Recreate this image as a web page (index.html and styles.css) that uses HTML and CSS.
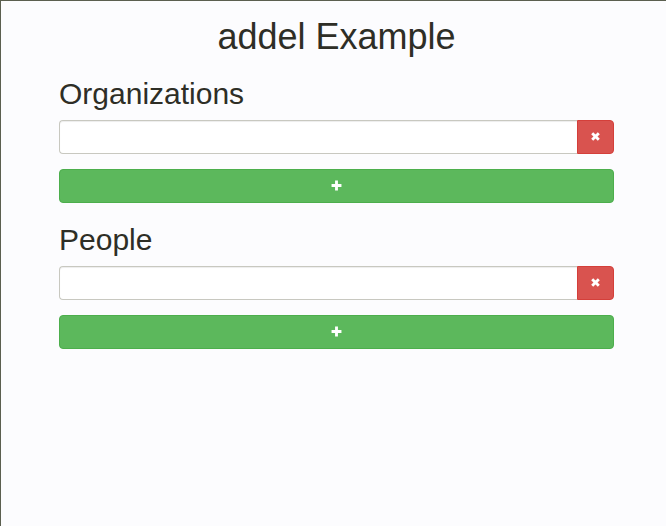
FILE: index.html
```html
<!DOCTYPE html>
<html>
<head>
<meta charset="utf-8">
<link rel="stylesheet" href="styles.css">
</head>
<body>
<div class="frame">
  <div class="container">
    <h1 class="title">addel Example</h1>
    <section class="group">
      <h2 class="heading">Organizations</h2>
      <div class="input-row">
        <input class="field" type="text">
        <button class="btn btn-del" type="button">
          <svg width="11" height="11" viewBox="0 0 10 10"><path d="M2 2 L8 8 M8 2 L2 8" stroke="#fff" stroke-width="2.6" stroke-linecap="butt"/></svg>
        </button>
      </div>
      <button class="btn btn-add" type="button">
        <svg width="11" height="11" viewBox="0 0 10 10"><path d="M5 0.5 V9.5 M0.5 5 H9.5" stroke="#fff" stroke-width="2.6"/></svg>
      </button>
    </section>
    <section class="group">
      <h2 class="heading">People</h2>
      <div class="input-row">
        <input class="field" type="text">
        <button class="btn btn-del" type="button">
          <svg width="11" height="11" viewBox="0 0 10 10"><path d="M2 2 L8 8 M8 2 L2 8" stroke="#fff" stroke-width="2.6" stroke-linecap="butt"/></svg>
        </button>
      </div>
      <button class="btn btn-add" type="button">
        <svg width="11" height="11" viewBox="0 0 10 10"><path d="M5 0.5 V9.5 M0.5 5 H9.5" stroke="#fff" stroke-width="2.6"/></svg>
      </button>
    </section>
  </div>
</div>
</body>
</html>
```

FILE: styles.css
```css
html, body {
  margin: 0;
  padding: 0;
  background: #fcfcfe;
}
body {
  font-family: "Liberation Sans", Arial, sans-serif;
  color: #2e2e26;
}
.frame {
  box-sizing: border-box;
  height: 526px;
  border-top: 1px solid #5b5f4f;
  border-left: 1px solid #5b5f4f;
}
.container {
  width: 555px;
  margin-left: 58px;
  display: flex;
  flex-direction: column;
}
.title {
  font-size: 36px;
  font-weight: 500;
  line-height: 1.1;
  text-align: center;
  margin: 16px 0 0;
}
.group {
  display: flex;
  flex-direction: column;
}
.heading {
  font-size: 30px;
  font-weight: 500;
  line-height: 33px;
  margin: 20px 0 10px;
}
.input-row {
  display: flex;
  height: 34px;
}
.field {
  flex: 1;
  box-sizing: border-box;
  height: 34px;
  margin: 0;
  border: 1px solid #c8c8c0;
  border-right: none;
  border-radius: 4px 0 0 4px;
  background: #fff;
  box-shadow: inset 0 1px 1px rgba(0,0,0,0.075);
}
.btn {
  box-sizing: border-box;
  height: 34px;
  margin: 0;
  padding: 0;
  display: flex;
  align-items: center;
  justify-content: center;
  cursor: pointer;
}
.btn-del {
  width: 37px;
  background: #d9534f;
  border: 1px solid #d43f3a;
  border-radius: 0 4px 4px 0;
}
.btn-add {
  width: 100%;
  margin-top: 15px;
  background: #5cb85c;
  border: 1px solid #4cae4c;
  border-radius: 4px;
}
```
